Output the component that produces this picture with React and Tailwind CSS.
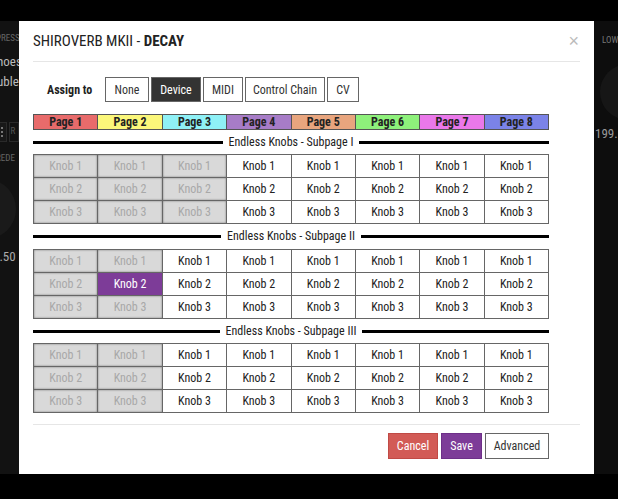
import React from "react";

const FONT = { fontFamily: '"Liberation Sans Narrow", "Roboto Condensed", "Liberation Sans", Roboto, sans-serif' };

const pages = [
  ["Page 1", "bg-[#e86b6b]"],
  ["Page 2", "bg-[#fbf77a]"],
  ["Page 3", "bg-[#8ff1f6]"],
  ["Page 4", "bg-[#a77cc7]"],
  ["Page 5", "bg-[#e8a57e]"],
  ["Page 6", "bg-[#8ef17b]"],
  ["Page 7", "bg-[#ea78ea]"],
  ["Page 8", "bg-[#7b83e8]"],
];

function Header({ label }) {
  return (
    <div className="flex items-center h-[16px] gap-[6px]">
      <div className="flex-1 h-[3px] bg-black" />
      <div className="text-[12px] text-[#222] leading-none">{label}</div>
      <div className="flex-1 h-[3px] bg-black" />
    </div>
  );
}

function Grid({ disabledCols, selected }) {
  const cells = [];
  for (let r = 0; r < 3; r++) {
    for (let c = 0; c < 8; c++) {
      const isSel = selected && selected[0] === r && selected[1] === c;
      const dis = !isSel && c < disabledCols;
      let cls = "h-[22px] flex items-center justify-center text-[12px] ";
      if (isSel) cls += "bg-[#7d3c98] text-white";
      else if (dis) cls += "bg-[#d9d9d9] text-[#a8a8a8] shadow-[inset_0_0_2px_#6f6f6f]";
      else cls += "bg-white text-[#222]";
      cells.push(
        <div key={r + "-" + c} className={cls}>
          Knob {r + 1}
        </div>
      );
    }
  }
  return <div className="grid grid-cols-8 gap-px p-px bg-[#666]">{cells}</div>;
}

function AssignBtn({ children, w, active }) {
  return (
    <div
      className={
        "h-[25px] flex items-center justify-center text-[12px] border border-[#666] " +
        w +
        (active ? " bg-[#333] text-white" : " bg-white text-[#333]")
      }
    >
      {children}
    </div>
  );
}

export default function App() {
  return (
    <div className="w-[618px] h-[499px] bg-black overflow-hidden flex flex-col" style={FONT}>
      <div className="h-[21px] bg-black shrink-0" />
      <div className="flex">
        {/* left background strip */}
        <div className="w-[19px] h-[453px] bg-[#121212] overflow-hidden flex flex-col text-[#888] whitespace-nowrap">
          <div className="mt-[11px] text-[9px] text-[#666] -ml-[4px]">PRESS</div>
          <div className="mt-[6px] text-[13px] text-[#bbb] -ml-[3px]">hoes</div>
          <div className="mt-[1px] text-[13px] text-[#bbb] -ml-[3px]">uble</div>
          <div className="mt-[30px] flex gap-[2px] -ml-[2px]">
            <div className="w-[10px] h-[20px] border border-[#2a2a2a] bg-[#181818] flex flex-col items-center justify-center gap-[2px]">
              <div className="w-[2px] h-[2px] bg-[#777]" />
              <div className="w-[2px] h-[2px] bg-[#777]" />
              <div className="w-[2px] h-[2px] bg-[#777]" />
            </div>
            <div className="w-[12px] h-[20px] border border-[#2a2a2a] text-[9px] text-[#555] flex items-center pl-[1px]">R</div>
          </div>
          <div className="mt-[10px] text-[9px] text-[#666] -ml-[4px]">REDE</div>
          <div className="mt-[14px] w-[60px] h-[60px] -ml-[44px] rounded-full bg-[#1a1a1a]" />
          <div className="mt-[8px] text-[13px] text-[#aaa] -ml-[7px]">7.50</div>
        </div>

        {/* modal */}
        <div className="w-[575px] h-[453px] bg-white flex flex-col px-[14px]">
          <div className="h-[41px] flex items-center justify-between border-b border-[#e6e6e6]">
            <div className="text-[15px] text-[#222] leading-none">
              SHIROVERB MKII - <span className="font-bold">DECAY</span>
            </div>
            <div className="text-[18px] text-[#bbb] leading-none pr-[1px]" style={{ fontFamily: '"Liberation Sans", sans-serif' }}>×</div>
          </div>

          <div className="w-[516px]">
            <div className="mt-[15px] flex items-center">
              <div className="w-[72px] pl-[14px] text-[12px] font-bold text-[#222]">Assign to</div>
              <div className="flex gap-[2px]">
                <AssignBtn w="w-[44px]">None</AssignBtn>
                <AssignBtn w="w-[50px]" active>Device</AssignBtn>
                <AssignBtn w="w-[40px]">MIDI</AssignBtn>
                <AssignBtn w="w-[80px]">Control Chain</AssignBtn>
                <AssignBtn w="w-[32px]">CV</AssignBtn>
              </div>
            </div>

            <div className="mt-[12px] grid grid-cols-8 gap-px p-px bg-[#555]">
              {pages.map(([l, c]) => (
                <div key={l} className={"h-[14px] flex items-center justify-center text-[12px] font-bold text-[#222] " + c}>
                  {l}
                </div>
              ))}
            </div>

            <div className="mt-[4px]">
              <Header label="Endless Knobs - Subpage I" />
            </div>
            <div className="mt-[4px]">
              <Grid disabledCols={3} />
            </div>
            <div className="mt-[4px]">
              <Header label="Endless Knobs - Subpage II" />
            </div>
            <div className="mt-[5px]">
              <Grid disabledCols={2} selected={[1, 1]} />
            </div>
            <div className="mt-[4px]">
              <Header label="Endless Knobs - Subpage III" />
            </div>
            <div className="mt-[4px]">
              <Grid disabledCols={2} />
            </div>
          </div>

          <div className="mt-[11px] border-t border-[#e6e6e6]" />
          <div className="w-[516px] mt-[8px] flex justify-end gap-[3px]">
            <div className="w-[50px] h-[26px] flex items-center justify-center text-[12px] text-white bg-[#d25b56] border border-[#c04a45]">Cancel</div>
            <div className="w-[41px] h-[26px] flex items-center justify-center text-[12px] text-white bg-[#7d3c98] border border-[#6d2f88]">Save</div>
            <div className="w-[64px] h-[26px] flex items-center justify-center text-[12px] text-[#333] bg-white border border-[#666]">Advanced</div>
          </div>
        </div>

        {/* right background strip */}
        <div className="w-[24px] h-[453px] bg-[#0d0d0d] overflow-hidden flex flex-col whitespace-nowrap">
          <div className="mt-[13px] ml-[8px] text-[9px] text-[#777]">LOW</div>
          <div className="mt-[16px] ml-[6px] w-[56px] h-[56px] rounded-full bg-[#161616]" />
          <div className="mt-[4px] ml-[1px] text-[13px] text-[#999]">199.5</div>
        </div>
      </div>
    </div>
  );
}
